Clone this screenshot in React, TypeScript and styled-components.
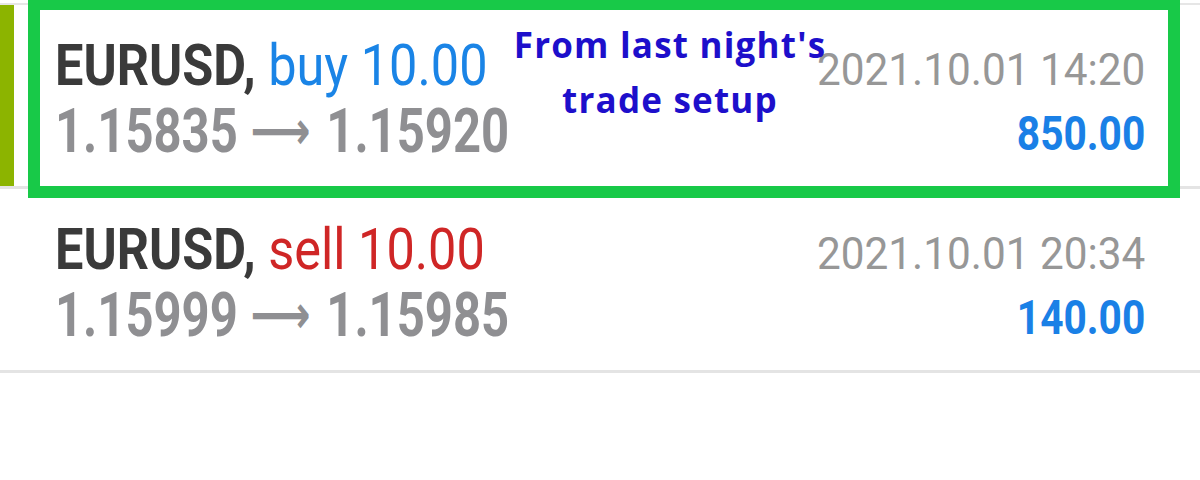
import React from 'react';
import styled, { createGlobalStyle } from 'styled-components';

const GlobalStyle = createGlobalStyle`
  html, body {
    margin: 0;
    padding: 0;
    background: #ffffff;
  }
  body {
    width: 1200px;
    height: 480px;
    overflow: hidden;
    font-family: Roboto, "Liberation Sans", sans-serif;
  }
`;

const Screen = styled.div`
  position: relative;
  width: 1200px;
  height: 480px;
  padding-top: 3px;
  box-sizing: border-box;
`;

const List = styled.div`
  border-top: 2px solid #e6e6e6;
`;

const Row = styled.div<{ $active?: boolean }>`
  display: grid;
  grid-template-columns: 1fr auto;
  grid-template-rows: 58px 62px;
  row-gap: 6px;
  align-items: baseline;
  height: 184px;
  box-sizing: border-box;
  padding: 31px 55px 0 55px;
  border-bottom: 3px solid #e4e4e4;
  box-shadow: ${(p) => (p.$active ? 'inset 14px 0 0 #8cb400' : 'none')};
`;

// the app uses a condensed face, so the lines are squeezed horizontally
const Title = styled.div`
  font-size: 58px;
  line-height: 58px;
  white-space: nowrap;
  transform: scaleX(0.87);
  transform-origin: left center;
`;

const Symbol = styled.span`
  font-weight: 700;
  color: #3a3a3a;
`;

const Side = styled.span<{ $kind: 'buy' | 'sell' }>`
  font-weight: 400;
  color: ${(p) => (p.$kind === 'buy' ? '#1a84e6' : '#cf2626')};
`;

const Prices = styled.div`
  font-size: 62px;
  line-height: 62px;
  font-weight: 700;
  color: #8f8f92;
  white-space: nowrap;
  transform: scaleX(0.79);
  transform-origin: left center;
`;

const Arrow = styled.span`
  font-family: "DejaVu Sans", sans-serif;
  font-size: 53px;
  line-height: 62px;
  font-weight: 700;
  vertical-align: 3px;
  margin: 0 20px 0 16px;
`;

const Time = styled.div`
  font-size: 45px;
  line-height: 58px;
  color: #979797;
  text-align: right;
  white-space: nowrap;
  transform: scaleX(0.94);
  transform-origin: right center;
`;

const Profit = styled.div`
  font-size: 49px;
  line-height: 62px;
  font-weight: 700;
  color: #1a80e6;
  text-align: right;
  white-space: nowrap;
  transform: scaleX(0.83) translateY(-2px);
  transform-origin: right center;
`;

const Highlight = styled.div`
  position: absolute;
  left: 28px;
  top: -2px;
  width: 1152px;
  height: 200px;
  box-sizing: border-box;
  border: 12px solid #18c948;
  pointer-events: none;
`;

const Note = styled.div`
  position: absolute;
  left: 510px;
  top: 17px;
  width: 320px;
  font-family: "Open Sans", "Noto Sans", sans-serif;
  font-weight: 700;
  font-size: 35px;
  letter-spacing: 1.2px;
  line-height: 55px;
  color: #1d0fcb;
  text-align: center;
  white-space: nowrap;
`;

type Trade = {
  symbol: string;
  side: 'buy' | 'sell';
  volume: string;
  open: string;
  close: string;
  time: string;
  profit: string;
  active?: boolean;
};

const trades: Trade[] = [
  { symbol: 'EURUSD', side: 'buy', volume: '10.00', open: '1.15835', close: '1.15920', time: '2021.10.01 14:20', profit: '850.00', active: true },
  { symbol: 'EURUSD', side: 'sell', volume: '10.00', open: '1.15999', close: '1.15985', time: '2021.10.01 20:34', profit: '140.00' },
];

const App = () => {
  return (
    <>
      <GlobalStyle />
      <Screen>
        <List>
          {trades.map((t, i) => (
            <Row key={i} $active={t.active}>
              <Title>
                <Symbol>{t.symbol},</Symbol> <Side $kind={t.side}>{t.side} {t.volume}</Side>
              </Title>
              <Time>{t.time}</Time>
              <Prices>
                {t.open}<Arrow>⟶</Arrow>{t.close}
              </Prices>
              <Profit>{t.profit}</Profit>
            </Row>
          ))}
        </List>
        <Highlight />
        <Note>
          From last night's
          <br />
          trade setup
        </Note>
      </Screen>
    </>
  );
};

export default App;
